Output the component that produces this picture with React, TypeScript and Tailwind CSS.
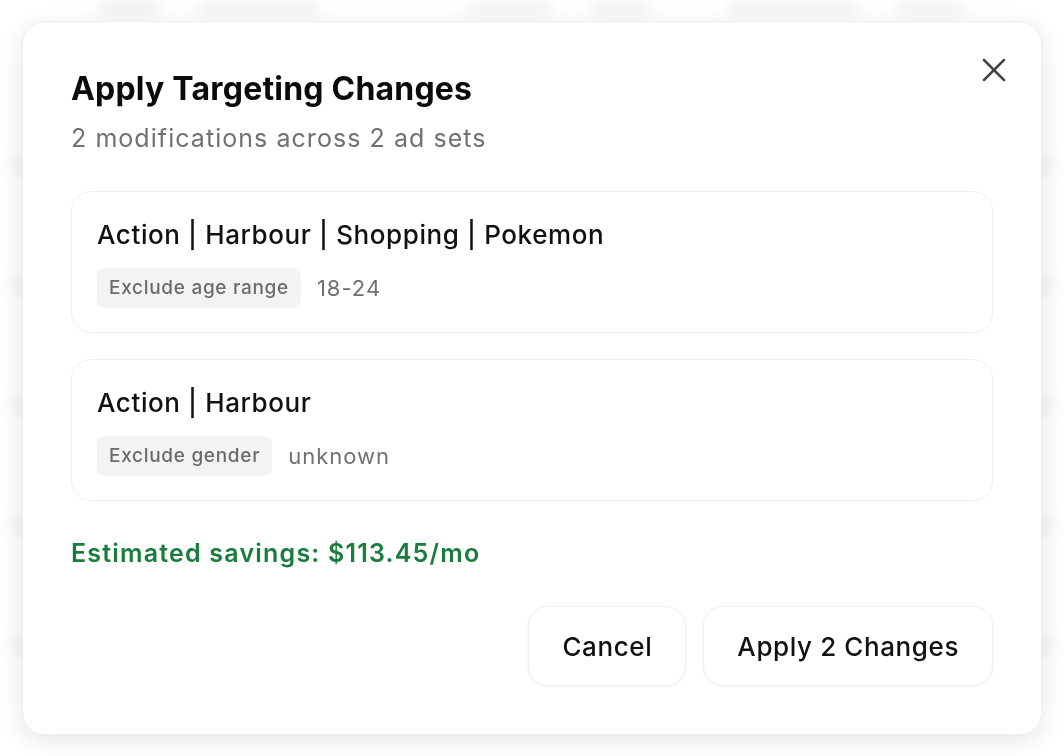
import { X } from "lucide-react";

const changes = [
  { adSet: "Action | Harbour | Shopping | Pokemon", label: "Exclude age range", value: "18-24" },
  { adSet: "Action | Harbour", label: "Exclude gender", value: "unknown" },
];

function BackdropPage() {
  // blurred page sitting behind the dialog
  return (
    <div className="min-h-screen bg-white blur-[7px]">
      <div className="flex gap-10 px-[100px] pt-0">
        <div className="h-4 w-[70px] rounded bg-[#e6e6e6]" />
        <div className="h-4 w-[140px] rounded bg-[#e9e9e9]" />
        <div className="h-4 w-[100px] rounded bg-[#ececec] ml-[110px]" />
        <div className="h-4 w-[70px] rounded bg-[#ececec]" />
        <div className="h-4 w-[150px] rounded bg-[#e9e9e9] ml-[40px]" />
        <div className="h-4 w-[80px] rounded bg-[#ececec]" />
      </div>
      <div className="flex flex-col gap-[100px] pt-[140px] px-2">
        {[0, 1, 2, 3, 4].map((i) => (
          <div key={i} className="h-5 w-full rounded bg-[#f0f0f0]" />
        ))}
      </div>
      <div className="flex gap-6 px-[60px] pt-[40px]">
        <div className="h-6 w-[300px] rounded bg-[#e4e4e4]" />
        <div className="h-6 w-[400px] rounded bg-[#e8e8e8]" />
        <div className="h-6 w-[40px] rounded bg-[#f3c9c0]" />
        <div className="h-6 w-[200px] rounded bg-[#e8e8e8]" />
      </div>
    </div>
  );
}

export default function App() {
  return (
    <div className="relative h-[756px] overflow-hidden" style={{ fontFamily: "Inter, 'Noto Sans', sans-serif" }}>
      <BackdropPage />
      <div className="fixed inset-0 flex items-center justify-center bg-white/40">
        <div className="relative w-[1020px] rounded-[22px] border border-[#ececec] bg-white px-[48px] pt-[47px] pb-[48px] shadow-[0_6px_24px_rgba(0,0,0,0.10)]">
          <button className="absolute right-[27px] top-[28px] text-[#444]">
            <X size={40} strokeWidth={1.5} />
          </button>

          <h2 className="text-[32px] leading-[40px] font-bold tracking-[0.2px] text-[#0b0b0b]">
            Apply Targeting Changes
          </h2>
          <p className="mt-[13px] text-[25px] leading-[32px] tracking-[1.05px] text-[#707075]">
            2 modifications across 2 ad sets
          </p>

          <div className="mt-[37px] flex flex-col gap-[26px]">
            {changes.map((c) => (
              <div key={c.adSet} className="rounded-[20px] border border-[#efefef] px-[25px] pt-[25px] pb-[24px]">
                <div className="text-[26px] leading-[36px] font-medium tracking-[0.6px] text-[#111]">{c.adSet}</div>
                <div className="mt-[15px] flex items-center gap-4">
                  <span className="flex h-[40px] items-center rounded-[8px] bg-[#f3f3f4] px-[12px] text-[19px] font-medium tracking-[0.7px] text-[#6b6b6f]">
                    {c.label}
                  </span>
                  <span className="text-[22px] tracking-[1px] text-[#707075]">{c.value}</span>
                </div>
              </div>
            ))}
          </div>

          <p className="mt-[36px] text-[25px] leading-[32px] font-semibold tracking-[1.2px] text-[#1a7d3e]">
            Estimated savings: $113.45/mo
          </p>

          <div className="mt-[37px] flex justify-end gap-[17px]">
            <button className="h-[80px] rounded-[20px] border border-[#efefef] bg-white px-[33px] text-[26px] font-medium tracking-[0.6px] text-[#111] shadow-[0_1px_3px_rgba(0,0,0,0.05)]">
              Cancel
            </button>
            <button className="h-[80px] rounded-[20px] border border-[#efefef] bg-white px-[33px] text-[26px] font-medium tracking-[0.6px] text-[#111] shadow-[0_1px_3px_rgba(0,0,0,0.05)]">
              Apply 2 Changes
            </button>
          </div>
        </div>
      </div>
    </div>
  );
}
